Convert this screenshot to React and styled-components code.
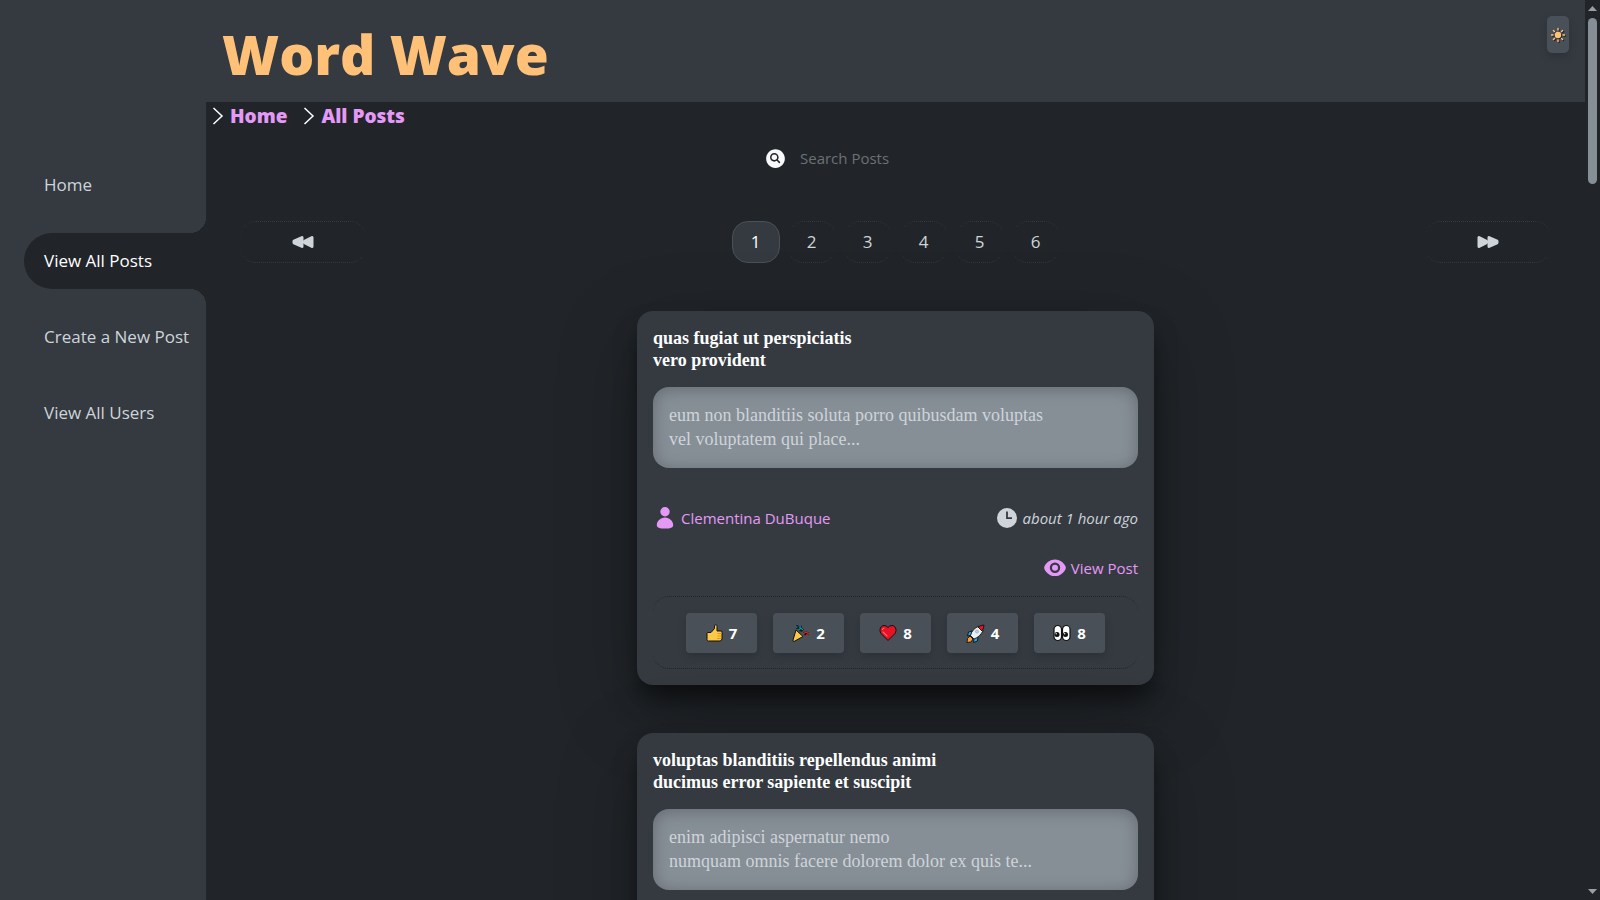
import React from "react";
import styled, { createGlobalStyle, css } from "styled-components";
import { IoSearchCircle, IoSunny } from "react-icons/io5";

const GlobalStyle = createGlobalStyle`
  *, *::before, *::after { box-sizing: border-box; }
  body {
    margin: 0;
    background: #212529;
    color: #ced4da;
    font-family: "Open Sans", "Noto Sans", sans-serif;
    font-size: 15px;
    line-height: 24px;
  }
  button, input { font: inherit; color: inherit; }
  a { color: inherit; text-decoration: none; }
  h1, h2, p { margin: 0; }
`;

const Page = styled.div`
  display: grid;
  grid-template-columns: 206px minmax(0, 1fr) 15px;
  height: 100vh;
  overflow: hidden;
`;

const Sidebar = styled.nav`
  display: flex;
  flex-direction: column;
  gap: 20px;
  padding: 157px 0 0 24px;
  background: #343a40;
`;

const NavLink = styled.a`
  position: relative;
  display: flex;
  align-items: center;
  height: 56px;
  padding-left: 20px;
  font-size: 17px;
  white-space: nowrap;
  border-radius: 28px 0 0 28px;

  ${(p) =>
    p.$active &&
    css`
      background: #212529;
      color: #fff;

      &::before,
      &::after {
        content: "";
        position: absolute;
        right: 0;
        width: 16px;
        height: 16px;
      }
      &::before {
        bottom: 100%;
        background: radial-gradient(circle at 0 0, #343a40 16px, #212529 16px);
      }
      &::after {
        top: 100%;
        background: radial-gradient(circle at 0 100%, #343a40 16px, #212529 16px);
      }
    `}
`;

const Content = styled.div`
  display: flex;
  flex-direction: column;
  min-height: 0;
`;

const Header = styled.header`
  display: flex;
  flex: none;
  justify-content: space-between;
  align-items: flex-start;
  height: 102px;
  padding: 16px;
  background: #343a40;
`;

const Logo = styled.h1`
  color: #ffc078;
  font-size: 55px;
  font-weight: 800;
  line-height: 76px;
`;

const ThemeButton = styled.button`
  display: flex;
  align-items: center;
  justify-content: center;
  width: 22px;
  height: 37px;
  padding: 0;
  border: 0;
  border-radius: 5px;
  background: #495057;
  color: #ffc078;
  box-shadow: 0 4px 8px rgba(0, 0, 0, 0.15);

  svg { filter: drop-shadow(1px 1px 0 #212529); }
`;

const Main = styled.main`
  display: flex;
  flex-direction: column;
  flex: 1;
  min-height: 0;
  overflow-x: hidden;
  overflow-y: auto;
  scrollbar-width: none;
`;

const Breadcrumbs = styled.nav`
  display: flex;
  flex: none;
  gap: 14px;
  height: 28px;
  padding-left: 4px;
  color: #e599f7;
  font-size: 19px;
  font-weight: 800;
  line-height: 28px;
`;

const Crumb = styled.a`
  display: flex;
  align-items: center;
  gap: 4px;
`;

const SearchBar = styled.label`
  display: flex;
  flex: none;
  justify-content: center;
  align-items: center;
  gap: 12px;
  height: 56px;
  color: #f8f9fa;
`;

const SearchInput = styled.input`
  width: 228px;
  height: 32px;
  padding: 0;
  border: 0;
  background: transparent;

  &::placeholder { color: #6c7177; opacity: 1; }
`;

const Pagination = styled.div`
  display: flex;
  flex: none;
  justify-content: space-between;
  margin-top: 35px;
  padding: 0 34px;
`;

const PageList = styled.div`
  display: flex;
  gap: 8px;
`;

const PageButton = styled.button`
  display: flex;
  align-items: center;
  justify-content: center;
  width: ${(p) => (p.$wide ? 126 : 48)}px;
  height: 42px;
  padding: 0;
  border: 1px dotted #343a40;
  border-width: 1px 0;
  border-radius: 16px;
  background: transparent;
  font-size: 17px;

  ${(p) =>
    p.$active &&
    css`
      border: 1px solid #495057;
      background: #343a40;
      color: #fff;
    `}
`;

const Feed = styled.section`
  display: flex;
  flex-direction: column;
  align-items: center;
  gap: 48px;
  padding: 48px 0;
`;

const Card = styled.article`
  width: 517px;
  min-height: 374px;
  padding: 16px;
  border-radius: 16px;
  background: #343a40;
  box-shadow:
    0 16px 24px -4px rgba(0, 0, 0, 0.55),
    0 24px 80px rgba(0, 0, 0, 0.25);
`;

const CardTitle = styled.h2`
  color: #fff;
  font-family: "Liberation Serif", serif;
  font-size: 18px;
  font-weight: 700;
  line-height: 22px;
  white-space: pre-line;
`;

const Excerpt = styled.p`
  margin-top: 16px;
  padding: 16px 16px 17px;
  border-radius: 16px;
  background: #868e96;
  box-shadow: inset 0 2px 16px rgba(0, 0, 0, 0.25);
  font-family: "Liberation Serif", serif;
  font-size: 18px;
  white-space: pre-line;
`;

const Meta = styled.div`
  display: flex;
  justify-content: space-between;
  align-items: center;
  margin-top: 38px;
`;

const IconText = styled.span`
  display: flex;
  align-items: center;
  gap: 4px;
  font-style: ${(p) => (p.$italic ? "italic" : "normal")};
`;

const IconLink = styled(IconText).attrs({ as: "a", href: "#" })`
  color: #e599f7;
`;

const ViewRow = styled.div`
  display: flex;
  justify-content: flex-end;
  margin-top: 26px;
`;

const Reactions = styled.div`
  display: flex;
  justify-content: center;
  gap: 16px;
  margin-top: 16px;
  padding: 16px 0 15px;
  border: 1px dotted #212529;
  border-width: 1px 0;
  border-radius: 16px;
`;

const ReactionButton = styled.button`
  display: flex;
  align-items: center;
  justify-content: center;
  gap: 6px;
  width: 71px;
  height: 40px;
  padding: 0;
  border: 0;
  border-radius: 4px;
  background: #495057;
  color: #fff;
  font-weight: 700;
  box-shadow: 0 4px 8px rgba(0, 0, 0, 0.15);
`;

const Scrollbar = styled.div`
  display: flex;
  flex-direction: column;
  align-items: center;
  justify-content: space-between;
  padding: 6px 0;
  background: #212529;
`;

const ScrollTop = styled.div`
  display: flex;
  flex-direction: column;
  align-items: center;
  gap: 7px;
`;

const Thumb = styled.div`
  width: 9px;
  height: 166px;
  border-radius: 5px;
  background: #868e96;
`;

const Chevron = () => (
  <svg width="16" height="18" viewBox="0 0 16 18" fill="none" stroke="#fff" strokeWidth="1.5">
    <path d="M3.5 1L12 9l-8.500 8" />
  </svg>
);

const Arrow = ({ down }) => (
  <svg width="9" height="5" viewBox="0 0 9 5" fill="#9a9fa5">
    <path d={down ? "M0 0h9L4.500 5z" : "M0 5h9L4.500 0z"} />
  </svg>
);

const Forward = () => (
  <svg width="22" height="14" viewBox="0 0 22 14" fill="currentColor" stroke="currentColor" strokeWidth="3" strokeLinejoin="round">
    <path d="M2 2.500v9L9 7.800V6.200zM12 2.500v9l8-3.700V6.200z" />
  </svg>
);

const Rewind = () => (
  <svg width="22" height="14" viewBox="0 0 22 14" fill="currentColor" stroke="currentColor" strokeWidth="3" strokeLinejoin="round">
    <path d="M20 2.500v9L13 7.800V6.200zM10 2.500v9L2 7.800V6.200z" />
  </svg>
);

const Person = () => (
  <svg width="24" height="24" viewBox="0 0 24 24" fill="currentColor">
    <circle cx="12" cy="5.800" r="4.700" />
    <path d="M12 11.600c4.800 0 8.200 3.800 8.200 7.600 0 2.400-3.200 3.400-8.200 3.400s-8.200-1-8.200-3.400c0-3.800 3.400-7.600 8.200-7.600z" />
  </svg>
);

const Clock = () => (
  <svg width="24" height="24" viewBox="0 0 24 24">
    <circle cx="12" cy="12" r="10" fill="currentColor" />
    <path d="M12 5.500v6.700h5" fill="none" stroke="#343a40" strokeWidth="1.800" />
  </svg>
);

const Eye = () => (
  <svg width="24" height="24" viewBox="0 0 24 24" fill="currentColor">
    <path
      fillRule="evenodd"
      d="M12 3.500c4.800 0 8.800 3.200 10.600 7q.5 1.200 0 2.400c-1.800 4-5.800 7.200-10.600 7.200s-8.800-3.200-10.600-7.200q-.5-1.200 0-2.400c1.800-3.800 5.800-7 10.600-7zm0 3.100a5.200 5.200 0 100 10.400 5.200 5.200 0 000-10.400z"
    />
    <circle cx="12" cy="11.800" r="3" />
  </svg>
);

const ThumbsUp = () => (
  <svg width="17" height="18" viewBox="0 0 17 18" stroke="#111" strokeWidth="1" strokeLinejoin="round">
    <path fill="#fcc845" d="M1 9.500q0-1 1-1h3L8.500 4.500V2c0-1.500 2.500-1.500 2.500.500V7h4q1.500 0 1 1.500v6q0 2.500-2 2.500H2.500Q1 17 1 15.500z" />
    <path stroke="#d9991a" fill="none" d="M11.500 9.500h4M11.500 12h4M11 14.500h4" />
  </svg>
);

const Party = () => (
  <svg width="18" height="18" viewBox="0 0 18 18" strokeLinejoin="round">
    <path fill="none" stroke="#111" strokeWidth="3.400" d="M4 3h2M8 1.700v3l3 2M7 6l3-2M12 10l2-1 2.500 1.500" />
    <path fill="none" stroke="#168aa5" strokeWidth="1.400" d="M4 3h1.500M8 1.500v2l3 2.500M6.500 6l2-1.500" />
    <path fill="none" stroke="#c92a2a" strokeWidth="1.400" d="M11 10l3-2 3 2M14 11h2" />
    <path fill="#fcc845" stroke="#111" d="M4 6l7 6.500-9 5q-1.500 0-1-1.500z" />
  </svg>
);

const Heart = () => (
  <svg width="18" height="18" viewBox="0 0 18 18">
    <path fill="#e81224" stroke="#111" strokeLinejoin="round" d="M9 16.500L2 9.500C-.5 5.500 2 1.500 5 1.500q2.500 0 4 2 1.500-2 4-2c3 0 5.500 4 3 8z" />
    <path fill="none" stroke="#ff6b77" strokeWidth="1.100" strokeLinecap="round" d="M3.500 5.500q.5-1 1.500-1.200M4 8l4 4" />
  </svg>
);

const Rocket = () => (
  <svg width="19" height="19" viewBox="0 0 19 19" stroke="#111" strokeWidth=".9" strokeLinejoin="round">
    <path fill="#f79a3c" d="M4 12l3 3-2 3-4 .5.500-4z" />
    <path fill="#2ba8e0" d="M6 7L2.500 8 1.500 12l4-1zM12 13l-.5 4-4 1.500.5-5z" />
    <path fill="#e6f1f7" d="M4.500 11.500Q6 5 13 2l4.500 4Q14 13 8 15z" />
    <path fill="#e81224" d="M12 3Q15 1 18 1q0 3-2 6z" />
    <circle cx="11" cy="7.500" r="1.600" fill="#c3ccd2" stroke="#8a949c" strokeWidth=".5" />
  </svg>
);

const Eyes = () => (
  <svg width="18" height="18" viewBox="0 0 18 18">
    <g fill="#fff" stroke="#111" strokeWidth="1.200">
      <rect x="1" y="1.500" width="7.500" height="15" rx="3.700" />
      <rect x="9.500" y="1.500" width="7.500" height="15" rx="3.700" />
    </g>
    <circle cx="4" cy="10.500" r="2.500" fill="#111" />
    <circle cx="12.500" cy="10.500" r="2.500" fill="#111" />
    <circle cx="3.200" cy="9.700" r=".7" fill="#fff" />
    <circle cx="11.700" cy="9.700" r=".7" fill="#fff" />
  </svg>
);

const REACTIONS = [
  { name: "Thumbs up", Icon: ThumbsUp },
  { name: "Celebrate", Icon: Party },
  { name: "Heart", Icon: Heart },
  { name: "Rocket", Icon: Rocket },
  { name: "Eyes", Icon: Eyes },
];

const NAV = ["Home", "View All Posts", "Create a New Post", "View All Users"];

const POSTS = [
  {
    title: "quas fugiat ut perspiciatis\nvero provident",
    body: "eum non blanditiis soluta porro quibusdam voluptas\nvel voluptatem qui place...",
    details: {
      author: "Clementina DuBuque",
      age: "about 1 hour ago",
      counts: [7, 2, 8, 4, 8],
    },
  },
  {
    title: "voluptas blanditiis repellendus animi\nducimus error sapiente et suscipit",
    body: "enim adipisci aspernatur nemo\nnumquam omnis facere dolorem dolor ex quis te...",
  },
];

function PostDetails({ author, age, counts }) {
  return (
    <>
      <Meta>
        <IconLink>
          <Person />
          {author}
        </IconLink>
        <IconText $italic>
          <Clock />
          {age}
        </IconText>
      </Meta>
      <ViewRow>
        <IconLink>
          <Eye />
          View Post
        </IconLink>
      </ViewRow>
      <Reactions>
        {REACTIONS.map(({ name, Icon }, i) => (
          <ReactionButton key={name} aria-label={`${name} ${counts[i]}`}>
            <Icon />
            {counts[i]}
          </ReactionButton>
        ))}
      </Reactions>
    </>
  );
}

function Post({ post }) {
  return (
    <Card>
      <CardTitle>{post.title}</CardTitle>
      <Excerpt>{post.body}</Excerpt>
      {post.details && <PostDetails {...post.details} />}
    </Card>
  );
}

export default function App() {
  return (
    <>
      <GlobalStyle />
      <Page>
        <Sidebar>
          {NAV.map((label) => (
            <NavLink key={label} href="#" $active={label === "View All Posts"}>
              {label}
            </NavLink>
          ))}
        </Sidebar>
        <Content>
          <Header>
            <Logo>Word Wave</Logo>
            <ThemeButton aria-label="Toggle theme">
              <IoSunny size={16} />
            </ThemeButton>
          </Header>
          <Main>
            <Breadcrumbs>
              <Crumb href="#"><Chevron />Home</Crumb>
              <Crumb href="#"><Chevron />All Posts</Crumb>
            </Breadcrumbs>
            <SearchBar>
              <IoSearchCircle size={25} />
              <SearchInput placeholder="Search Posts" aria-label="Search Posts" />
            </SearchBar>
            <Pagination>
              <PageButton $wide aria-label="Previous page"><Rewind /></PageButton>
              <PageList>
                {[1, 2, 3, 4, 5, 6].map((n) => (
                  <PageButton key={n} $active={n === 1}>{n}</PageButton>
                ))}
              </PageList>
              <PageButton $wide aria-label="Next page"><Forward /></PageButton>
            </Pagination>
            <Feed>
              {POSTS.map((post) => (
                <Post key={post.title} post={post} />
              ))}
            </Feed>
          </Main>
        </Content>
        <Scrollbar>
          <ScrollTop>
            <Arrow />
            <Thumb />
          </ScrollTop>
          <Arrow down />
        </Scrollbar>
      </Page>
    </>
  );
}
